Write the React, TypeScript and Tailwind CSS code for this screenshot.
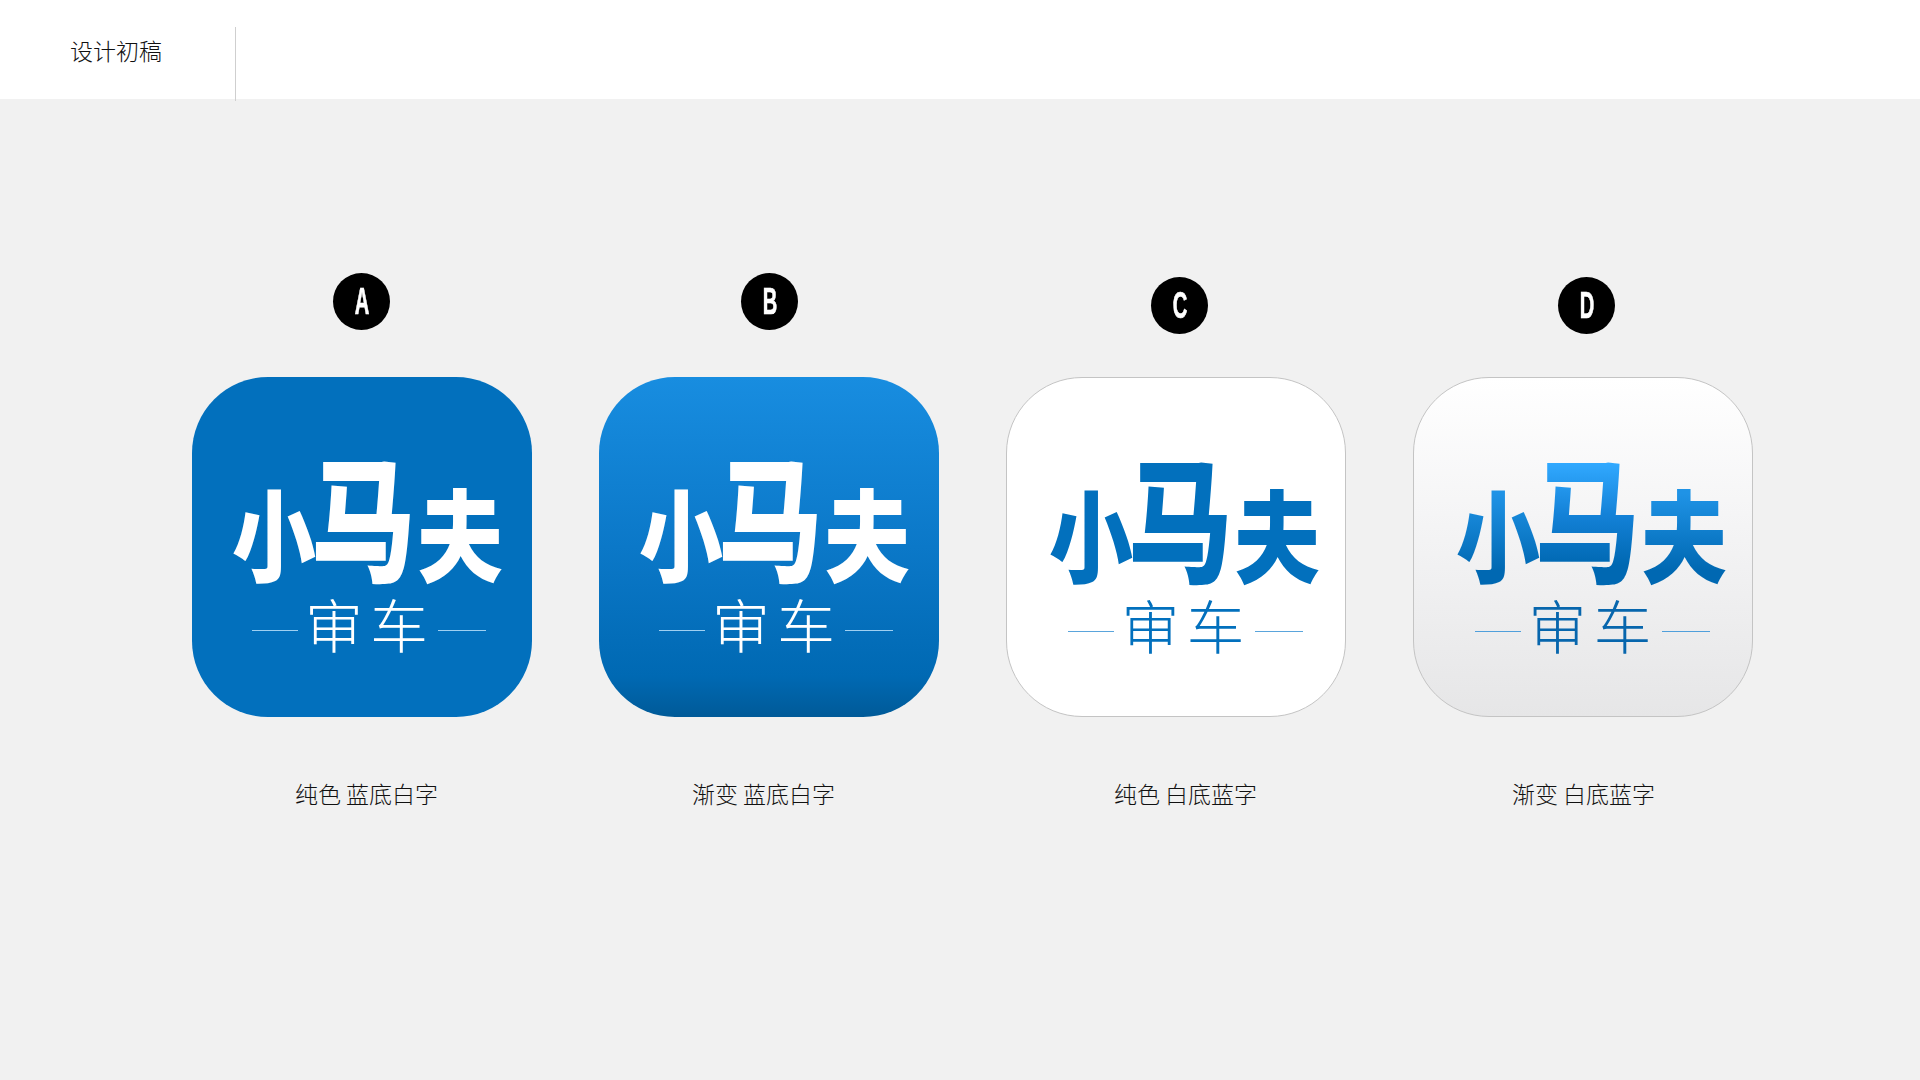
const cjk = "font-['Noto_Sans_CJK_SC','Noto_Sans',sans-serif]";

type Option = {
  letter: string;
  label: string;
  badgeClass: string;
  labelClass: string;
  iconClass: string;
  lowClass: string;
  tallClass: string;
  subClass: string;
  lineClass: string;
};

const options: Option[] = [
  {
    letter: "A",
    label: "纯色 蓝底白字",
    badgeClass: "mt-[273px] ml-[141px]",
    labelClass: "ml-[103px]",
    iconClass: "bg-[#0270bd]",
    lowClass: "text-white",
    tallClass: "text-white",
    subClass: "text-white",
    lineClass: "bg-[#9fd0f2]",
  },
  {
    letter: "B",
    label: "渐变 蓝底白字",
    badgeClass: "mt-[273px] ml-[142px]",
    labelClass: "ml-[93px]",
    iconClass:
      "bg-[linear-gradient(180deg,#188de0_0%,#0b78c8_50%,#0069b3_88%,#005a98_100%)]",
    lowClass: "text-white",
    tallClass: "text-white",
    subClass: "text-white",
    lineClass: "bg-[#9fd0f2]",
  },
  {
    letter: "C",
    label: "纯色 白底蓝字",
    badgeClass: "mt-[277px] ml-[145px]",
    labelClass: "ml-[108px]",
    iconClass: "pl-[5px] bg-white border border-[#c4c4c4]",
    lowClass: "text-[#0270bd]",
    tallClass: "text-[#0270bd]",
    subClass: "text-[#0270bd]",
    lineClass: "bg-[#5aa5dc]",
  },
  {
    letter: "D",
    label: "渐变 白底蓝字",
    badgeClass: "mt-[277px] ml-[145px]",
    labelClass: "ml-[99px]",
    iconClass:
      "pl-[5px] bg-[linear-gradient(180deg,#ffffff_0%,#f5f5f6_40%,#e6e6e7_100%)] border border-[#c4c4c4]",
    lowClass:
      "bg-[linear-gradient(180deg,#1f93e6_15%,#0068b2_85%)] bg-clip-text text-transparent",
    tallClass:
      "bg-[linear-gradient(180deg,#31a9ff_15%,#1482d8_50%,#0068b2_85%)] bg-clip-text text-transparent",
    subClass: "text-[#0766ad]",
    lineClass: "bg-[#4f9fdb]",
  },
];

const AppIcon = ({ o }: { o: Option }) => (
  <div
    className={`w-[340px] h-[340px] rounded-[76px] flex flex-col items-center overflow-hidden ${o.iconClass}`}
  >
    <div className="flex items-end h-[130px] mt-[79px] ml-[11px] font-black">
      <span className={`${cjk} inline-block w-[100px] -mx-[10px] text-center text-[100px] leading-[110px] scale-x-[.84] ${o.lowClass}`}>
        小
      </span>
      <span className={`${cjk} inline-block w-[134px] -mx-[18px] text-center text-[134px] leading-[146px] scale-x-[.78] ${o.tallClass}`}>
        马
      </span>
      <span className={`${cjk} inline-block w-[100px] -ml-[2px] -mr-[9px] text-center text-[100px] leading-[110px] scale-x-[.86] ${o.lowClass}`}>
        夫
      </span>
    </div>
    <div className="flex items-start mt-[7px] ml-[14px] h-[60px]">
      <div className={`w-[46px] h-px mt-[37px] ${o.lineClass}`} />
      <span className={`${cjk} ml-[7px] mr-[3px] text-[58px] leading-[60px] font-light tracking-[7px] ${o.subClass}`}>
        审车
      </span>
      <div className={`w-[48px] h-px mt-[37px] ${o.lineClass}`} />
    </div>
  </div>
);

const App = () => {
  return (
    <div className={`w-[1920px] h-[1080px] bg-[#f1f1f1] overflow-hidden ${cjk}`}>
      <header className="h-[99px] bg-white flex items-stretch">
        <div className="w-[235px] pl-[70px] pt-[34px] text-[23px] leading-[32px] font-light text-[#111]">
          设计初稿
        </div>
        <div className="w-px mt-[27px] -mb-[2px] bg-[#cfcfcf]" />
      </header>
      <main className="flex gap-[67px] pl-[192px]">
        {options.map((o) => (
          <section key={o.letter} className="w-[340px] flex flex-col items-start -mt-[99px]">
            <div
              className={`w-[57px] h-[57px] rounded-full bg-black flex items-center justify-center ${o.badgeClass}`}
            >
              <span className="font-['Liberation_Sans',sans-serif] font-bold text-white text-[36px] leading-none scale-x-[.56] [-webkit-text-stroke:0.7px_white]">
                {o.letter}
              </span>
            </div>
            <div className={o.letter === "A" || o.letter === "B" ? "mt-[47px]" : "mt-[43px]"}>
              <AppIcon o={o} />
            </div>
            <p className={`mt-[60px] text-[23px] leading-[32px] font-light text-[#111] ${o.labelClass}`}>
              {o.label}
            </p>
          </section>
        ))}
      </main>
    </div>
  );
};

export default App;
